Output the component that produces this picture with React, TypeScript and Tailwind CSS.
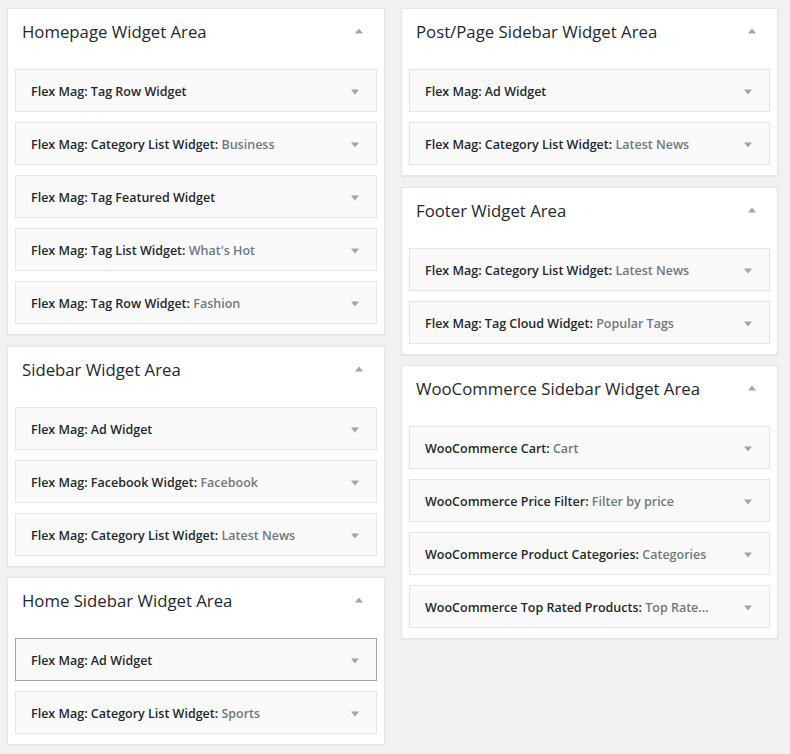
type Widget = { name: string; title?: string; active?: boolean };
type Area = { name: string; widgets: Widget[] };

const left: Area[] = [
  {
    name: "Homepage Widget Area",
    widgets: [
      { name: "Flex Mag: Tag Row Widget" },
      { name: "Flex Mag: Category List Widget", title: "Business" },
      { name: "Flex Mag: Tag Featured Widget" },
      { name: "Flex Mag: Tag List Widget", title: "What's Hot" },
      { name: "Flex Mag: Tag Row Widget", title: "Fashion" },
    ],
  },
  {
    name: "Sidebar Widget Area",
    widgets: [
      { name: "Flex Mag: Ad Widget" },
      { name: "Flex Mag: Facebook Widget", title: "Facebook" },
      { name: "Flex Mag: Category List Widget", title: "Latest News" },
    ],
  },
  {
    name: "Home Sidebar Widget Area",
    widgets: [
      { name: "Flex Mag: Ad Widget", active: true },
      { name: "Flex Mag: Category List Widget", title: "Sports" },
    ],
  },
];

const right: Area[] = [
  {
    name: "Post/Page Sidebar Widget Area",
    widgets: [
      { name: "Flex Mag: Ad Widget" },
      { name: "Flex Mag: Category List Widget", title: "Latest News" },
    ],
  },
  {
    name: "Footer Widget Area",
    widgets: [
      { name: "Flex Mag: Category List Widget", title: "Latest News" },
      { name: "Flex Mag: Tag Cloud Widget", title: "Popular Tags" },
    ],
  },
  {
    name: "WooCommerce Sidebar Widget Area",
    widgets: [
      { name: "WooCommerce Cart", title: "Cart" },
      { name: "WooCommerce Price Filter", title: "Filter by price" },
      { name: "WooCommerce Product Categories", title: "Categories" },
      { name: "WooCommerce Top Rated Products", title: "Top Rate..." },
    ],
  },
];

function Arrow({ up }: { up?: boolean }) {
  return (
    <svg width="8" height="6" viewBox="0 0 8 6" className="shrink-0">
      <path d={up ? "M4 0.5 L8 5.5 L0 5.5 Z" : "M0 0.5 L8 0.5 L4 5.5 Z"} fill="#a0a5aa" />
    </svg>
  );
}

function WidgetRow({ w }: { w: Widget }) {
  return (
    <div
      className={`h-[43px] flex items-center justify-between pl-[15px] pr-[17px] bg-[#fafafa] border ${
        w.active ? "border-[#a0a5aa]" : "border-[#e5e5e5]"
      }`}
    >
      <span className="mt-[4px] text-[12.5px] font-semibold text-[#23282d] whitespace-nowrap">
        {w.name}
        {w.title && (
          <>
            : <span className="text-[#72777c]">{w.title}</span>
          </>
        )}
      </span>
      <div className="mt-[3px]">
        <Arrow />
      </div>
    </div>
  );
}

function AreaPanel({ area }: { area: Area }) {
  return (
    <div className="bg-white border border-[#e5e5e5] shadow-[0_1px_1px_rgba(0,0,0,0.04)]">
      <div className="h-[46px] flex items-center justify-between pl-[14px] pr-[21px]">
        <h2 className="text-[16.75px] font-normal text-[#23282d]">{area.name}</h2>
        <div className="-mt-[2px]">
          <Arrow up />
        </div>
      </div>
      <div className="mt-[14px] px-[7px] pb-[10px] flex flex-col gap-[10px]">
        {area.widgets.map((w, i) => (
          <WidgetRow key={i} w={w} />
        ))}
      </div>
    </div>
  );
}

export default function App() {
  return (
    <div
      className="min-h-[754px] w-[790px] bg-[#f1f1f1] pt-[8px] pl-[7px] flex gap-[16px] items-start"
      style={{ fontFamily: '"Open Sans", "Liberation Sans", sans-serif' }}
    >
      <div className="w-[378px] flex flex-col gap-[10.5px]">
        {left.map((a) => (
          <AreaPanel key={a.name} area={a} />
        ))}
      </div>
      <div className="w-[377px] flex flex-col gap-[10.5px]">
        {right.map((a) => (
          <AreaPanel key={a.name} area={a} />
        ))}
      </div>
    </div>
  );
}
